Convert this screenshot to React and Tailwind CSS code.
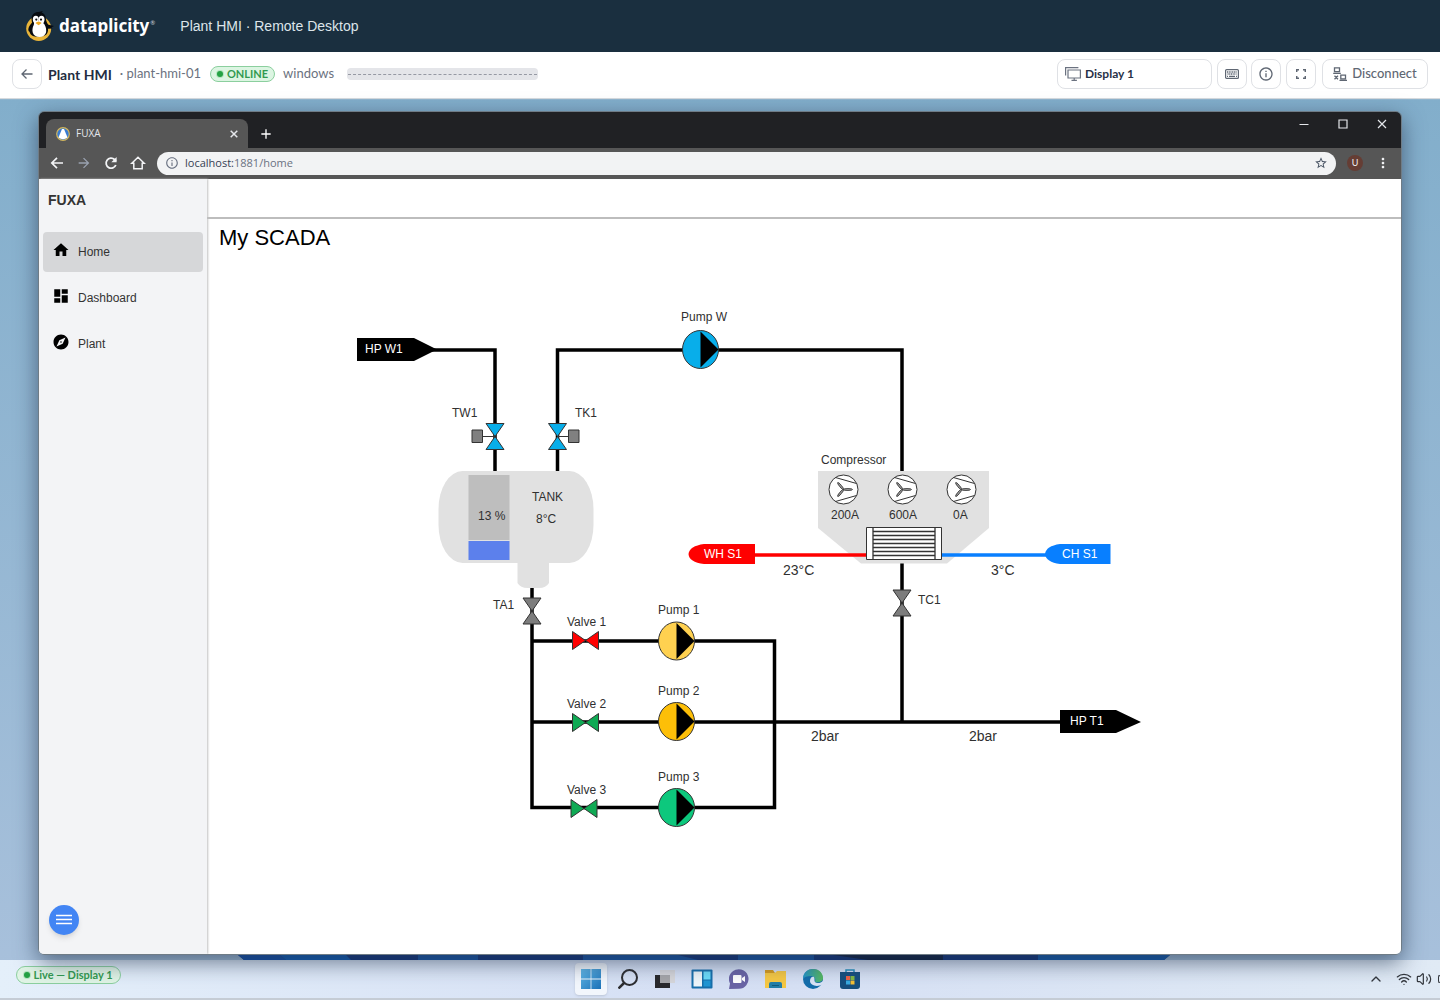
import React from "react";
import {
  MdArrowForward, MdHome, MdDashboard, MdExplore,
  MdInfoOutline, MdStarBorder, MdMoreVert, MdAdd,
} from "react-icons/md";
import { Wifi, Volume2, ChevronUp } from "lucide-react";

const BUTTON =
  "flex h-[30px] items-center justify-center rounded-lg border border-[#dfe1e5] bg-white text-[#5f6773]";

function PenguinLogo() {
  return (
    <svg viewBox="0 0 30 32" className="h-8 w-[30px]" aria-hidden="true">
      <circle cx="13.700" cy="18.500" r="12.500" fill="#e9b53a" />
      <path d="M6.500 9C6.500 4.500 9.500 2 13.500 2l4.500-1-1.500 1.500c3.500 1 4.500 4.500 4.700 8 .5 2 1.300 3.200 2.300 4.200l5.500 1.300-2.500 1.200 1 1.300-4.500.2c.5 5-2.500 8-9.500 8-5 0-8-1-9-5-2-1-1.500-5 2.500-9Z" fill="#070b10" />
      <path d="M9 14.500c1.500-2 9-2 10.500 0 3 5 2.500 12.500-5 12.500-7.500 0-8.500-7-5.500-12.500Z" fill="#fff" />
      <ellipse cx="10.800" cy="9.500" rx="3" ry="3.700" fill="#fff" />
      <ellipse cx="16.500" cy="9.500" rx="3" ry="3.700" fill="#fff" />
      <path d="M9 11h9.500v4.500H9z" fill="#fff" />
      <circle cx="11.300" cy="9.600" r="1.100" fill="#111" />
      <circle cx="16" cy="9.600" r="1.100" fill="#111" />
      <path d="M10.500 13q3-3 6.200 0l-3.100 2.300Z" fill="#f0a91f" />
    </svg>
  );
}

function DisplaysIcon() {
  return (
    <svg viewBox="0 0 16 16" className="h-4 w-4" fill="none" stroke="#6b7280" strokeWidth="1.2" aria-hidden="true">
      <path d="M.6 9.500V1.600h12.800M3 4h12.400v8H3zM9.200 12v2.300M6.500 14.400h5.400" />
    </svg>
  );
}

function KeyboardIcon() {
  return (
    <svg viewBox="0 0 14 10" className="h-[10px] w-[14px]" fill="none" stroke="#5f6773" aria-hidden="true">
      <rect x=".6" y=".6" width="12.800" height="8.800" rx="1" strokeWidth="1.2" />
      <path d="M2 3h10M2.500 5h9" strokeDasharray="1.100 .6" strokeWidth="1.3" />
      <path d="M4 7.400h6M2 7.400h1M11 7.400h1" strokeWidth="1.1" />
    </svg>
  );
}

function DisconnectIcon() {
  return (
    <svg viewBox="0 0 14 14" className="h-[14px] w-[14px]" fill="none" stroke="#5f6773" strokeWidth="1.3" aria-hidden="true">
      <path d="M1.500.8h5v3.800h-5zM.2 6.300h7.600M7.800 8.200h4.700v3.600H7.800zM6.500 13.300H14M1.500 8.800l3.500 3.500M5 8.800l-3.500 3.500" />
    </svg>
  );
}

function TopBar() {
  return (
    <header className="flex h-[52px] shrink-0 items-center bg-[#1a2f3f] px-[25px]">
      <a href="#home" className="flex items-center gap-1 text-white">
        <PenguinLogo />
        <span className="font-['Noto_Sans',sans-serif] text-[17px] leading-6 font-bold">dataplicity</span>
        <span className="-ml-[3px] self-start pt-[10px] text-[6px] leading-none text-gray-300">®</span>
      </a>
      <span className="ml-[25px] font-['Liberation_Sans',sans-serif] text-[14px] text-[#dde5ea]">
        Plant HMI · Remote Desktop
      </span>
    </header>
  );
}

function SessionBar() {
  return (
    <div className="z-10 flex h-[46px] shrink-0 items-center bg-white px-3 pb-[2px] text-[13px] text-[#6b7280] shadow-[0_1px_1px_#d6dade]">
      <button aria-label="Back" className={BUTTON + " w-[30px]"}>
        <svg viewBox="0 0 12 12" className="h-3 w-3" fill="none" stroke="currentColor" strokeWidth="1.3" aria-hidden="true">
          <path d="M11.500 6H1M5.500 1.500 1 6l4.500 4.500" />
        </svg>
      </button>
      <h1 className="ml-[6px] text-[14px] font-bold text-[#232d42]">Plant HMI</h1>
      <span className="ml-2">· plant-hmi-01</span>
      <span className="ml-[9px] flex h-4 items-center gap-1 rounded-full border border-[#8bcf9e] bg-[#dcf5e2] px-[6px] text-[11px] font-bold text-[#329a50]">
        <i className="h-[6px] w-[6px] rounded-full bg-[#25a244] ring-1 ring-[#b5e5c0]" />
        ONLINE
      </span>
      <span className="ml-2">windows</span>
      <span className="ml-[13px] flex h-3 w-[191px] items-center rounded bg-[#e4e5e9] px-px">
        <i className="w-full border-t border-dashed border-[#9699a3]" />
      </span>
      <div className="ml-auto flex items-center">
        <label className={BUTTON + " w-[155px] gap-1 px-[7px]"}>
          <DisplaysIcon />
          <select aria-label="Display" className="min-w-0 flex-1 appearance-none bg-transparent text-[12px] font-bold text-[#283147]">
            <option>Display 1</option>
          </select>
        </label>
        <button aria-label="Keyboard" className={BUTTON + " ml-[5px] w-[30px]"}><KeyboardIcon /></button>
        <button aria-label="Information" className={BUTTON + " ml-1 w-[30px]"}><MdInfoOutline className="h-4 w-4" /></button>
        <button aria-label="Full screen" className={BUTTON + " ml-[5px] w-[30px]"}>
          <svg viewBox="0 0 10 10" className="h-[10px] w-[10px]" fill="none" stroke="currentColor" strokeWidth="1.5" aria-hidden="true">
            <path d="M.7 3V.7H3M7 .7h2.300V3M9.300 7v2.300H7M3 9.300H.7V7" />
          </svg>
        </button>
        <button className={BUTTON + " ml-[6px] w-[106px] gap-[5px] font-medium"}>
          <DisconnectIcon />
          Disconnect
        </button>
      </div>
    </div>
  );
}

function BrowserChrome() {
  return (
    <>
      <div className="flex h-9 shrink-0 items-end bg-[#202124] pl-[7px] text-white">
        <div className="flex h-[29px] w-[202px] items-center rounded-t-lg bg-[#565656] px-[10px] text-gray-200">
          <svg viewBox="0 0 14 14" className="h-[14px] w-[14px]" aria-hidden="true">
            <circle cx="7" cy="7" r="6.300" fill="#387bd0" stroke="#d4b65a" strokeWidth="1.200" />
            <path d="M6 2h2l3.500 8.500q-4.500 3.500-9 0Z" fill="#fff" />
          </svg>
          <span className="ml-[6px] font-['Open_Sans',sans-serif] text-[10px]">FUXA</span>
          <button aria-label="Close tab" className="ml-auto">
            <svg viewBox="0 0 8 8" className="h-2 w-2" stroke="currentColor" strokeWidth="1.500"><path d="m.7.7 6.600 6.600M7.300.7.700 7.300" /></svg>
          </button>
        </div>
        <button aria-label="New tab" className="ml-[10px] flex h-[29px] items-center"><MdAdd className="h-4 w-4" /></button>
        <div className="mr-[14px] ml-auto flex h-9 items-start gap-[29px] pt-[7px] text-gray-200">
          <button aria-label="Minimize">
            <svg viewBox="0 0 10 10" className="h-[10px] w-[10px]" stroke="currentColor"><path d="M.5 5.500h9" /></svg>
          </button>
          <button aria-label="Maximize">
            <svg viewBox="0 0 10 10" className="h-[10px] w-[10px]" fill="none" stroke="currentColor" strokeWidth="1.200"><path d="M1 1h8v8H1z" /></svg>
          </button>
          <button aria-label="Close window">
            <svg viewBox="0 0 10 10" className="h-[10px] w-[10px]" stroke="currentColor" strokeWidth="1.200"><path d="m1 1 8 8M9 1 1 9" /></svg>
          </button>
        </div>
      </div>
      <div className="flex h-[31px] shrink-0 items-center bg-[#565656] px-[10px] pb-px text-gray-100">
        <div className="flex items-center gap-[11px]">
          <button aria-label="Back">
            <svg viewBox="0 0 16 16" className="h-4 w-4" fill="none" stroke="currentColor" strokeWidth="1.700"><path d="M14 8H3M8 2.800 2.800 8 8 13.200" /></svg>
          </button>
          <button aria-label="Forward" className="text-gray-400"><MdArrowForward className="h-4 w-4" /></button>
          <button aria-label="Reload">
            <svg viewBox="0 0 16 16" className="h-4 w-4" fill="none" stroke="currentColor" strokeWidth="1.800"><path d="M12.800 10A5 5 0 1 1 11.500 4.500L13 6" /><path d="M13.600 2v5.300H8.300Z" fill="currentColor" stroke="none" /></svg>
          </button>
          <button aria-label="Home page">
            <svg viewBox="0 0 16 16" className="h-4 w-4" fill="none" stroke="currentColor" strokeWidth="1.500"><path d="M1.800 8.300 8 2.200l6.200 6.100h-2v5.500H3.800V8.300Z" /></svg>
          </button>
        </div>
        <div className="ml-[11px] flex h-[23px] min-w-0 flex-1 items-center rounded-full bg-[#f2f3f4] px-2 font-['Open_Sans',sans-serif] text-[11px] text-gray-500">
          <MdInfoOutline className="h-[14px] w-[14px] shrink-0" />
          <div className="ml-[6px]"><span className="text-gray-700">localhost:</span>1881/home</div>
          <button aria-label="Bookmark" className="ml-auto"><MdStarBorder className="h-[14px] w-[14px] text-gray-600" /></button>
        </div>
        <button aria-label="Profile" className="ml-[11px] flex h-4 w-4 items-center justify-center rounded-full bg-[#653d34] text-[9px]">U</button>
        <button aria-label="Browser menu" className="ml-3"><MdMoreVert className="h-4 w-4" /></button>
      </div>
    </>
  );
}

function NavItem({ icon: Icon, label, active }) {
  return (
    <a
      href={"#" + label.toLowerCase()}
      className={"flex h-10 items-center rounded-sm pl-[9px] text-[12px] text-[#333] " + (active ? "bg-[#d6d7d9]" : "")}
    >
      <Icon className="mb-1 h-[18px] w-[18px] text-black" />
      <span className="ml-2">{label}</span>
    </a>
  );
}

function Pump({ x, y, color }) {
  return (
    <g>
      <ellipse cx={x} cy={y} rx="18" ry="19" fill={color} stroke="#333" />
      <path d={`M${x} ${y - 18}v36l18-18Z`} fill="#000" />
    </g>
  );
}

function Valve({ x, y, color, vertical }) {
  return (
    <path
      d={vertical ? `M${x - 9} ${y - 13}h18l-9 13ZM${x} ${y}l9 13h-18Z` : `M${x - 13} ${y - 9}v18l13-9ZM${x} ${y}l13-9v18Z`}
      fill={color}
      stroke="#333"
    />
  );
}

function Fan({ x }) {
  return (
    <g transform={`translate(${x} 489.500)`} fill="none" stroke="#333">
      <circle r="14.500" fill="#fff" />
      <path d="M-8-12 13-6M-8 12 13 6" />
      <g fill="#999" strokeWidth=".8">
        <ellipse cx="4.500" cy="0" rx="4.500" ry="1" />
        <ellipse cx="4.500" cy="0" rx="4.500" ry="1" transform="rotate(130)" />
        <ellipse cx="4.500" cy="0" rx="4.500" ry="1" transform="rotate(230)" />
      </g>
    </g>
  );
}

const LABELS = [
  [681, 321, "Pump W"], [452, 417, "TW1"], [575, 417, "TK1"], [478, 520, "13 %"],
  [532, 501, "TANK"], [536, 523, "8°C"], [821, 464, "Compressor"], [831, 519, "200A"],
  [889, 519, "600A"], [953, 519, "0A"], [918, 604, "TC1"], [493, 609, "TA1"],
  [567, 626, "Valve 1"], [567, 708, "Valve 2"], [567, 794, "Valve 3"],
  [658, 614, "Pump 1"], [658, 695, "Pump 2"], [658, 781, "Pump 3"],
];
const READINGS = [[783, 575, "23°C"], [991, 575, "3°C"], [811, 741, "2bar"], [969, 741, "2bar"]];
const TAGS = [[365, 353, "HP W1"], [1070, 725, "HP T1"], [704, 558, "WH S1"], [1062, 558, "CH S1"]];

function Schematic() {
  return (
    <svg
      viewBox="340 300 820 540"
      className="h-[540px] w-[820px] shrink-0 font-['Liberation_Sans',sans-serif]"
      role="img"
      aria-label="Plant schematic"
    >
      <g fill="none" stroke="#000" strokeWidth="3.500">
        <path d="M430 350h65v121M557.500 471V350H902v121M902 562v160M532 588v219.500h242.500V641H532M532 722h530" />
      </g>
      <path d="M357 338h57l23 11.500-23 11.500h-57ZM1060 710h56l25 12-25 11h-56Z" />
      <rect x="438.500" y="471" width="155" height="92" rx="24" ry="38" fill="#e1e1e1" />
      <path d="M517.500 550H549v33q-3 5-10 5h-11.500q-7 0-10-5Z" fill="#e1e1e1" />
      <path d="M468.500 475h41v65h-41z" fill="#bebebe" />
      <path d="M468.500 541h41v19h-41z" fill="#5c80ec" />
      <path d="M818 471h171v57l-42 35.500h-86L818 528Z" fill="#e1e1e1" />
      <path d="M754 555h114" stroke="#f00" strokeWidth="3.500" />
      <path d="M940 555h108" stroke="#087fff" strokeWidth="3.500" />
      <path d="M755 544v20h-51q-15-2-15.500-10 1-8 15.500-10Z" fill="#f00" />
      <path d="M1110.500 544v20H1060q-14-2-15-10 1-8 15-10Z" fill="#087fff" />
      <path d="M866.500 527.500h75v32h-75z" fill="#fff" stroke="#333" />
      <path d="M873 528v31M935 528v31M873 531.500h62M873 535.500h62M873 539.500h62M873 543.500h62M873 547.500h62M873 551.500h62M873 555.500h62" stroke="#333" strokeWidth="1.300" />
      <Fan x={843.5} />
      <Fan x={902.5} />
      <Fan x={961.5} />
      <Valve x={495} y={436.5} color="#08aeea" vertical />
      <Valve x={557.5} y={436.5} color="#08aeea" vertical />
      <path d="M483 436.500h12M557 436.500h12" stroke="#333" />
      <path d="M472 430h10.500v12.500H472zM568.500 430H579v12.500h-10.500z" fill="#808080" stroke="#333" />
      <Valve x={532} y={611} color="#7d7d7d" vertical />
      <Valve x={902} y={603} color="#7d7d7d" vertical />
      <Valve x={585.5} y={640.5} color="#f00" />
      <Valve x={585.5} y={722.5} color="#0faa54" />
      <Valve x={584} y={808.5} color="#0faa54" />
      <Pump x={700.5} y={349.5} color="#08aeea" />
      <Pump x={676.5} y={641} color="#ffd150" />
      <Pump x={676.5} y={721.5} color="#fdbf08" />
      <Pump x={676.5} y={807.5} color="#0dc87d" />
      <g fill="#303030" className="text-[12px]">
        {LABELS.map(([x, y, t]) => <text key={t} x={x} y={y}>{t}</text>)}
      </g>
      <g fill="#303030" className="text-[14px]">
        {READINGS.map(([x, y, t]) => <text key={x} x={x} y={y}>{t}</text>)}
      </g>
      <g fill="#fff" className="text-[12px]">
        {TAGS.map(([x, y, t]) => <text key={t} x={x} y={y}>{t}</text>)}
      </g>
    </svg>
  );
}

function ScadaPage() {
  return (
    <div className="flex min-h-0 flex-1 bg-white font-['Liberation_Sans',sans-serif]">
      <aside className="z-10 flex w-[168px] shrink-0 flex-col bg-[#f3f4f6] px-1 shadow-[1px_0_2px_#c0c0c0]">
        <h2 className="mt-[11px] pl-[5px] text-[14px] leading-5 font-bold text-[#333]">FUXA</h2>
        <nav className="mt-[22px] flex flex-col gap-[6px]">
          <NavItem icon={MdHome} label="Home" active />
          <NavItem icon={MdDashboard} label="Dashboard" />
          <NavItem icon={MdExplore} label="Plant" />
        </nav>
        <button aria-label="Menu" className="mt-auto mb-[19px] ml-[6px] flex h-[30px] w-[30px] items-center justify-center rounded-full bg-[#4285f4] shadow-md">
          <svg viewBox="0 0 16 12" className="h-3 w-4" stroke="#fff" strokeWidth="1.700"><path d="M0 1.500h16M0 5.500h16M0 9.500h16" /></svg>
        </button>
      </aside>
      <main className="min-w-0 flex-1 overflow-hidden">
        <div className="h-10 border-b-2 border-[#bdbdbd]" />
        <h2 className="pt-[5px] pl-3 text-[22px] leading-7 text-black">My SCADA</h2>
        <div className="pt-[48px] pl-[133px]"><Schematic /></div>
      </main>
    </div>
  );
}

const APP_BUTTON = "flex h-8 w-8 items-center justify-center";

function Taskbar() {
  return (
    <footer className="grid h-10 shrink-0 grid-cols-[1fr_auto_1fr] items-center border-b-2 border-[#c5ccd5] bg-linear-to-r from-[#e4effa] via-[#d5dff4] to-[#e0eaf5]">
      <div className="mt-[6px] ml-4 flex h-[18px] w-[105px] items-center justify-center gap-[3px] self-start rounded-full border border-[#8bcf9e] bg-[#e0f4e5] text-[11px] font-bold text-[#329a50]">
        <i className="h-[6px] w-[6px] shrink-0 rounded-full bg-[#25a244] ring-1 ring-[#b5e5c0]" />
        <span className="whitespace-nowrap">Live — Display 1</span>
      </div>
      <div className="flex items-center gap-[5px]">
        <button aria-label="Start" className={APP_BUTTON + " rounded bg-[#f2f6fc] shadow-sm"}>
          <svg viewBox="0 0 20 20" className="h-5 w-5">
            <defs><linearGradient id="win" x2="1" y2="1"><stop stopColor="#61b8e8" /><stop offset="1" stopColor="#1d72b8" /></linearGradient></defs>
            <path d="M0 0h9.600v9.600H0zM10.400 0H20v9.600h-9.600zM0 10.400h9.600V20H0zM10.400 10.400H20V20h-9.600z" fill="url(#win)" />
          </svg>
        </button>
        <button aria-label="Search" className={APP_BUTTON}>
          <svg viewBox="0 0 20 20" className="h-5 w-5" fill="none" stroke="#2d2d30" strokeWidth="2"><circle cx="11.500" cy="8.500" r="7.500" /><path d="m6.500 13.500-6 6" strokeWidth="2.500" /></svg>
        </button>
        <button aria-label="Task view" className={APP_BUTTON}>
          <svg viewBox="0 0 20 20" className="h-5 w-5"><path d="M0 6h15v13H0z" fill="#29292c" /><path d="M5 1h15v13H5z" fill="#d6d6da" /><path d="M5 6h10v8H5z" fill="#a6a6a9" /></svg>
        </button>
        <button aria-label="Widgets" className={APP_BUTTON}>
          <svg viewBox="0 0 22 20" className="h-5 w-[22px]"><rect x=".5" y=".5" width="21" height="19" rx="1" fill="#176fab" /><path d="M2.500 2.500H11v15H2.500z" fill="#eef6fa" /><path d="M12.500 2.500h7v8h-7z" fill="#6bdcfa" /><path d="M12.500 11.500h7v6h-7z" fill="#2196d3" /></svg>
        </button>
        <button aria-label="Chat" className={APP_BUTTON}>
          <svg viewBox="0 0 20 20" className="h-5 w-5"><path d="M0 20l1-5.500A9.800 9.800 0 1 1 10 19.800Z" fill="#6a64a5" /><rect x="4" y="6" width="8.500" height="8" rx="1" fill="#fff" /><path d="m13 9 3-2v6l-3-2Z" fill="#fff" /></svg>
        </button>
        <button aria-label="Files" className={APP_BUTTON}>
          <svg viewBox="0 0 22 20" className="h-5 w-[22px]"><path d="M0 1h8l2 3H0z" fill="#d79c1e" /><path d="M0 4h10l2-2h9v17H0z" fill="#f6c843" /><path d="M4 19v-4q0-2 2-2h9q2 0 2 2v4Z" fill="#247fa8" /><path d="M7 16h7v1H7z" fill="#125b7c" /></svg>
        </button>
        <button aria-label="Edge" className={APP_BUTTON}>
          <svg viewBox="0 0 20 20" className="h-5 w-5">
            <defs><linearGradient id="edge" x2="1"><stop stopColor="#2494c8" /><stop offset="1" stopColor="#58b95b" /></linearGradient></defs>
            <circle cx="10" cy="10" r="10" fill="#146daa" />
            <path d="M0 10C0 3 5 0 10 0c7 0 10 5 10 9s-5 5-8 4c1-2 0-6-4-6-4 0-7 1-8 3Z" fill="url(#edge)" />
            <path d="M7 12c0-3 2-5 4-4 1 2 0 4 1 5 2 2 6 1 8-1v3c-6 4-13 1-13-3Z" fill="#d9e3f5" />
          </svg>
        </button>
        <button aria-label="Store" className={APP_BUTTON}>
          <svg viewBox="0 0 20 20" className="h-5 w-5"><path d="M6 4V1h8v3" fill="none" stroke="#2790bd" strokeWidth="1.500" /><path d="M0 3h20v14q0 3-3 3H3q-3 0-3-3Z" fill="#164f7e" /><path d="M6 7h4v4H6z" fill="#ec6045" /><path d="M10.500 7h4v4h-4z" fill="#83b943" /><path d="M6 11.500h4v4H6z" fill="#38aae0" /><path d="M10.500 11.500h4v4h-4z" fill="#f4bf35" /></svg>
        </button>
      </div>
      <div className="flex items-center justify-end overflow-hidden text-[#32363c]">
        <button aria-label="Hidden icons" className="mr-3"><ChevronUp className="h-4 w-4" /></button>
        <Wifi className="h-4 w-4" strokeWidth="2" />
        <Volume2 className="ml-1 h-4 w-4" strokeWidth="1.800" />
        <i className="ml-[6px] h-2 w-[2px] rounded-l border border-r-0 border-[#32363c]" />
      </div>
    </footer>
  );
}

export default function App() {
  return (
    <div className="flex h-screen flex-col overflow-hidden font-['Lato',sans-serif]">
      <TopBar />
      <SessionBar />
      <div className="flex min-h-0 flex-1 flex-col bg-linear-to-b from-[#82aecb] to-[#a9c1dc]">
        <section className="z-10 mx-[38px] mt-[13px] flex min-h-0 flex-1 flex-col overflow-hidden rounded-md border border-[#6f7c86] shadow-[0_7px_22px_#283c55aa]">
          <BrowserChrome />
          <ScadaPage />
        </section>
        <svg viewBox="0 0 932 5" preserveAspectRatio="none" className="mr-[270px] ml-[238px] h-[5px] shrink-0" aria-hidden="true">
          <path d="M0 0h932l-6 5H6Z" fill="#0a2c78" />
          <path d="M0 0h42l6 5H6Z" fill="#0a48a8" />
          <path d="M42 0h66l5 5H48Z" fill="#0756b5" />
          <path d="M180 0h60v5h-60zM345 0h95l20 5H345zM500 0h76v5h-76z" fill="#0f4fa6" />
          <path d="M595 0h110v5h-75z" fill="#061437" />
          <path d="M800 0h132l-6 5H800z" fill="#0a55ad" />
        </svg>
        <Taskbar />
      </div>
    </div>
  );
}
